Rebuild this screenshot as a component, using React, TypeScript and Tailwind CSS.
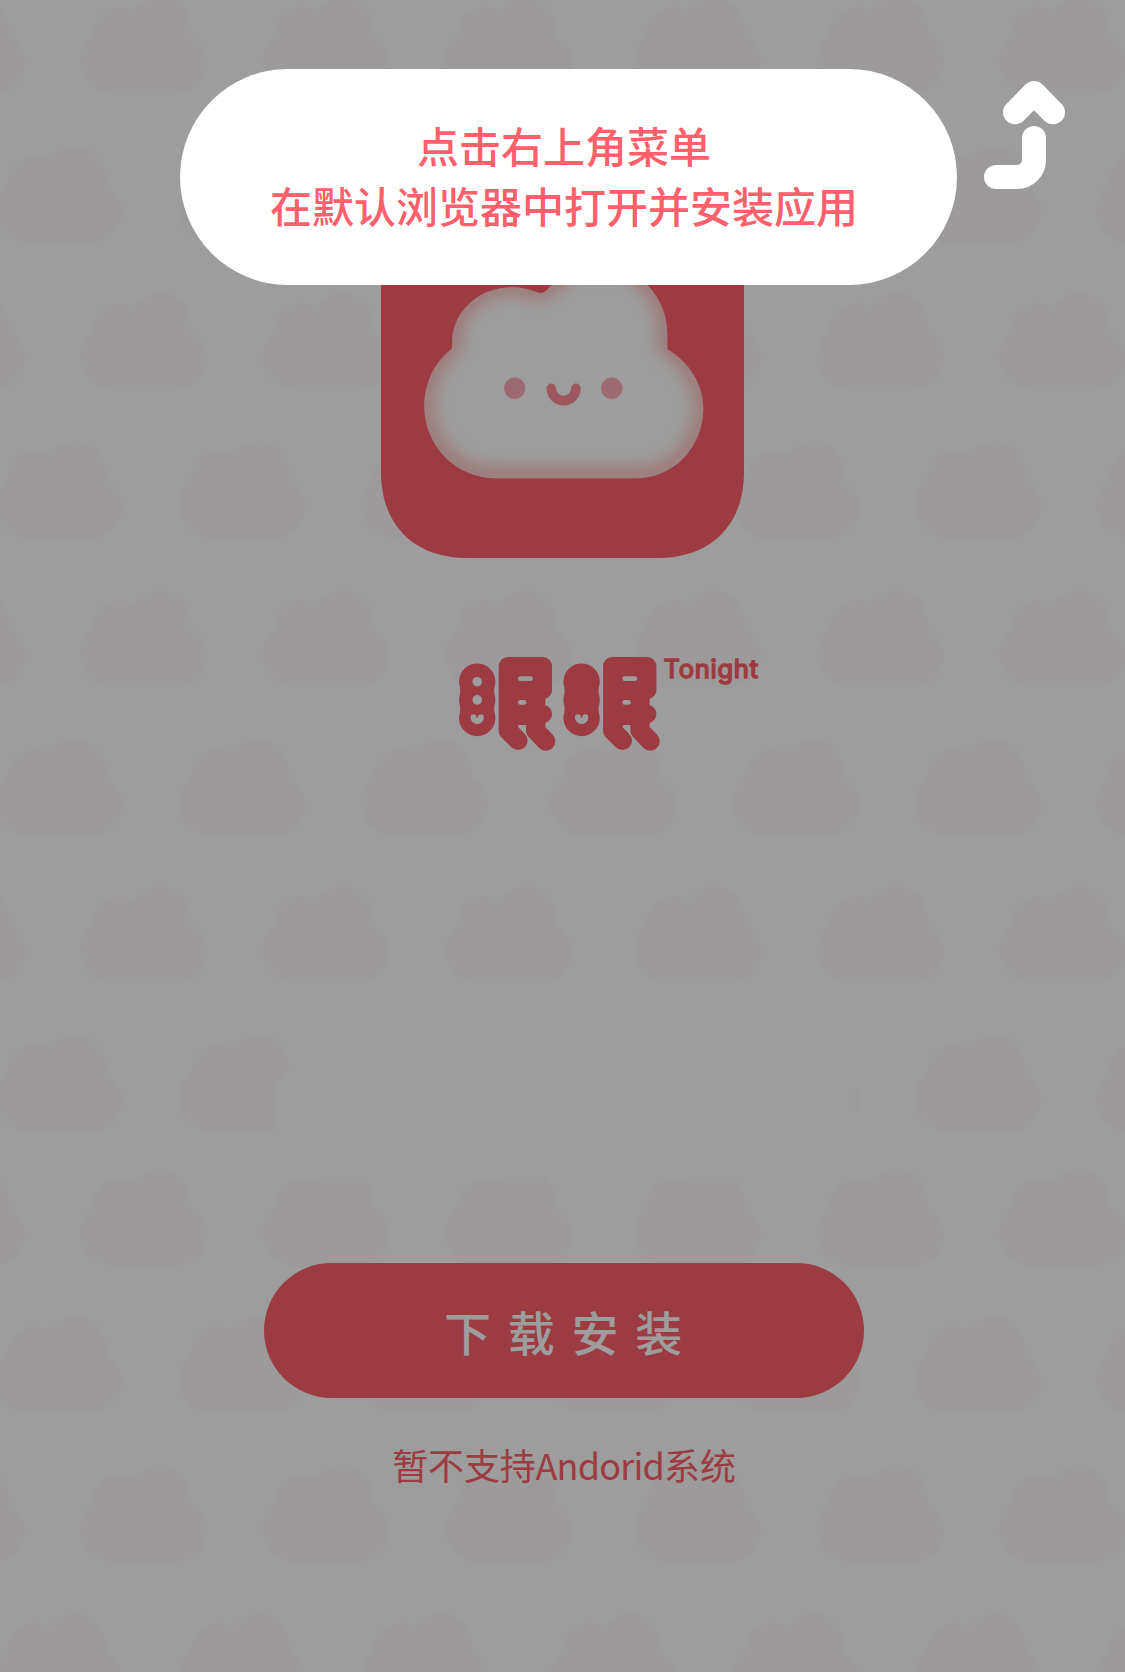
const CLOUD =
  'M71 213H212C249 213 279 182 279 143C279 119 265 97 243 84V68C243 30 211 0 180 0C158 0 140 8 128 19C121 26 120 29 113 27C104 24 98 22 88 22C53 22 28 48 28 76Q28 82 27 84C10 97 0 118 0 141C0 182 33 213 71 213Z';

const ROW_A = [-102, 80, 262.5, 445, 634, 817, 999];
const ROW_B = [-5, 178.5, 361, 550, 732.5, 914.5, 1096];
const ROWS = [-3, 146, 293, 441, 590, 739, 886, 1034.5, 1169, 1316, 1465, 1613];

function CloudPattern() {
  return (
    <svg className="absolute inset-0" width="1125" height="1672" viewBox="0 0 1125 1672">
      {ROWS.map((y, i) =>
        (i % 2 === 0 ? ROW_A : ROW_B).map((x) => (
          <path
            key={`${x}-${y}`}
            d={CLOUD}
            fill="#fffbfc"
            transform={`translate(${x} ${y}) scale(0.456)`}
          />
        )),
      )}
      <path d="M300 1020H855V1177H277V1084L290 1070Z" fill="#fff" />
    </svg>
  );
}

function AppIcon() {
  return (
    <svg className="block shrink-0" width="363" height="363" viewBox="0 0 363 363">
      <defs>
        <clipPath id="cloud-clip">
          <path d={CLOUD} />
        </clipPath>
        <filter id="glow" x="-20%" y="-20%" width="140%" height="140%">
          <feGaussianBlur stdDeviation="9" />
        </filter>
      </defs>
      <path
        d="M86 0H277C330 0 363 33 363 86V277C363 330 330 363 277 363H86C33 363 0 330 0 277V86C0 33 33 0 86 0Z"
        fill="#ff606b"
      />
      <g transform="translate(43.3 70.3)">
        <path d={CLOUD} fill="#fff" />
        <g clipPath="url(#cloud-clip)">
          <path
            d={CLOUD}
            fill="none"
            stroke="#ff7f78"
            strokeWidth="13"
            opacity="0.68"
            filter="url(#glow)"
            transform="translate(0 -2)"
          />
        </g>
      </g>
      <circle cx="133.7" cy="193.3" r="10.7" fill="#ffadbc" />
      <circle cx="230.7" cy="193.3" r="10.7" fill="#ffadbc" />
      <path d="M170.3 193.3a12.3 12.3 0 0 0 24.6 0" fill="none" stroke="#ff8f9b" strokeWidth="9.6" strokeLinecap="round" />
    </svg>
  );
}

function LogoMark({ eyes }: { eyes: boolean }) {
  const id = eyes ? 'mark-awake' : 'mark-asleep';
  return (
    <>
      <mask id={id} maskUnits="userSpaceOnUse" x="450" y="650" width="120" height="110">
        <rect x="450" y="650" width="120" height="110" fill="#fff" />
        {eyes && <circle cx="477.2" cy="681.7" r="4.8" fill="#000" />}
        {eyes && <circle cx="477.2" cy="699.9" r="4.8" fill="#000" />}
        <path d="M473.5 717.2a3.7 3.7 0 0 0 7.4 0" fill="none" stroke="#000" strokeWidth="6" strokeLinecap="round" />
        <rect x="518" y="676.3" width="14.7" height="4.7" rx="2.2" fill="#000" />
        <rect x="518" y="700" width="8.3" height="4.7" rx="2.2" fill="#000" />
      </mask>
      <g mask={`url(#${id})`} fill="#ff606b">
        <circle cx="477.2" cy="681.6" r="18.2" />
        <circle cx="477.2" cy="699.9" r="18.2" />
        <circle cx="477.2" cy="718" r="18.2" />
        <rect x="460.2" y="682" width="34" height="36" />
        <path d="M507.7 657H543a9 9 0 0 1 9 9V690c0 4-3 7.5-6.7 8.8V705c4 1.5 6.7 5 6.7 9s-2.7 7.3-6.7 9V727l7.2 7.5a9.3 9.3 0 0 1-13.4 13.5L528.3 736.5q-2.3-2.2-2.3-5V725H519q-1.8 1-.5 2.5L524.9 733.9a9.3 9.3 0 0 1-13.4 13.3L501 737q-2.3-2.5-2.3-5.5V666a9 9 0 0 1 9-9Z" />
      </g>
    </>
  );
}

function Logo() {
  return (
    <svg className="ml-[450px] mt-[92px] block shrink-0" width="320" height="110" viewBox="450 650 320 110">
      <LogoMark eyes />
      <g transform="translate(104.4 0)">
        <LogoMark eyes={false} />
      </g>
      <text
        x="663.5"
        y="677.5"
        textLength="94.5"
        lengthAdjust="spacing"
        fill="#ff606b"
        stroke="#ff606b"
        strokeWidth="1.6"
        strokeLinejoin="round"
        className="font-['Inter'] text-[25.5px]"
      >
        Tonight
      </text>
    </svg>
  );
}

function ArrowUp() {
  return (
    <svg
      className="ml-[27px] mt-3 block"
      width="82"
      height="110"
      viewBox="984 81 82 110"
      fill="none"
      stroke="#fff"
      strokeWidth="24"
      strokeLinecap="round"
      strokeLinejoin="round"
    >
      <path d="M1015 112.3L1034 93L1053 112.3" />
      <path d="M1034 138V160a17 17 0 0 1-17 17H996" />
    </svg>
  );
}

export default function App() {
  return (
    <main className="relative h-[1672px] w-[1125px] overflow-hidden bg-white font-['Noto_Sans_CJK_SC',sans-serif] text-[#ff606b]">
      <CloudPattern />
      <div className="relative flex h-full flex-col pt-[195px]">
        <div className="pl-[381px]">
          <AppIcon />
        </div>
        <Logo />
        <button className="mt-[503px] ml-[264px] h-[135px] w-[600px] shrink-0 rounded-full bg-[#ff606b] pl-[15px] text-[47px] leading-[135px] font-medium tracking-[16.7px] text-white">
          下载安装
        </button>
        <p className="mt-[39px] pl-[3px] text-center text-[36px] leading-[54px] tracking-[-0.2px]">
          暂不支持<span className="tracking-[-0.8px]">Andorid</span>系统
        </p>
      </div>
      <div className="absolute inset-0 bg-black/[0.385]" />
      <div className="absolute inset-x-0 top-0 flex pt-[69px] pl-[180px]">
        <div className="flex h-[216px] w-[777px] flex-col items-center justify-center rounded-full bg-white pr-[9px] pb-1 text-[42px] leading-[60px] font-medium">
          <p>点击右上角菜单</p>
          <p>在默认浏览器中打开并安装应用</p>
        </div>
        <ArrowUp />
      </div>
    </main>
  );
}
